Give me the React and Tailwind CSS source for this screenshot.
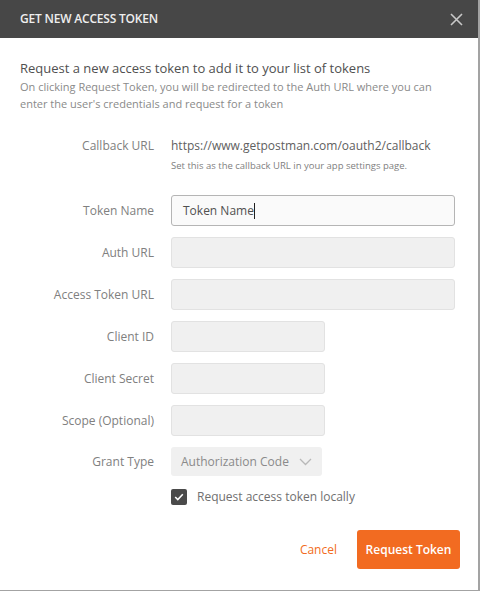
import React from 'react';

const font = { fontFamily: '"Open Sans", "Noto Sans", Arial, sans-serif' };

function Row({ label, width = 'w-[284px]', children }) {
    return (
        <div className="flex items-center">
            <div className="w-[154px] text-right text-[12px] text-[#808080]">{label}</div>
            <div className="ml-[17px]">
                {children || (
                    <div className={`${width} h-[31px] rounded-[3px] border border-[#e2e2e2] bg-[#f0f0f0]`} />
                )}
            </div>
        </div>
    );
}

export default function App() {
    return (
        <div className="w-[483px] h-[592px] bg-white overflow-hidden" style={font}>
            <div className="w-[480px] h-[591px] border-r-2 border-b border-[#a3a3a3] bg-white flex flex-col">

                {/* Header */}
                <div className="h-[38px] bg-[#474747] flex items-center justify-between pl-5 pr-[15px] shrink-0">
                    <span className="text-[12px] font-semibold text-[#eeeeee] tracking-[-0.2px]">GET NEW ACCESS TOKEN</span>
                    <svg width="13" height="13" viewBox="0 0 13 13" className="text-[#c8c8c8]">
                        <path d="M1 1 L12 12 M12 1 L1 12" stroke="currentColor" strokeWidth="1.6" />
                    </svg>
                </div>

                {/* Intro */}
                <div className="px-5 pt-[21px]">
                    <div className="text-[13px] text-[#505050] leading-[18px]">Request a new access token to add it to your list of tokens</div>
                    <div className="text-[11px] text-[#8a8a8a] leading-[17px] mt-[1px]">
                        On clicking Request Token, you will be redirected to the Auth URL where you can enter the user's credentials and request for a token
                    </div>
                </div>

                {/* Callback */}
                <div className="flex mt-[25px]">
                    <div className="w-[154px] text-right text-[12px] text-[#808080] leading-[18px]">Callback URL</div>
                    <div className="ml-[17px]">
                        <div className="text-[12px] text-[#606060] leading-[18px]">https://www.getpostman.com/oauth2/callback</div>
                        <div className="text-[9.5px] text-[#808080] mt-[4px] leading-[14px]">Set this as the callback URL in your app settings page.</div>
                    </div>
                </div>

                {/* Fields */}
                <div className="flex flex-col gap-[11px] mt-[22px]">
                    <Row label="Token Name">
                        <div className="w-[284px] h-[31px] rounded-[3px] border border-[#b5b5b5] bg-[#fafafa] flex items-center pl-[11px] text-[12px] text-[#505050]">
                            Token Name<span className="w-px h-[16px] bg-[#202020]" />
                        </div>
                    </Row>
                    <Row label="Auth URL" />
                    <Row label="Access Token URL" />
                    <Row label="Client ID" width="w-[154px]" />
                    <Row label="Client Secret" width="w-[154px]" />
                    <Row label="Scope (Optional)" width="w-[154px]" />
                    <Row label="Grant Type">
                        <div className="w-[151px] h-[29px] rounded-[3px] bg-[#f0f0f0] flex items-center justify-between pl-[10px] pr-[10px] text-[12px] text-[#8a8a8a]">
                            <span>Authorization Code</span>
                            <svg width="13" height="8" viewBox="0 0 13 8">
                                <path d="M1 1 L6.5 6.5 L12 1" fill="none" stroke="#b8b8b8" strokeWidth="1.3" />
                            </svg>
                        </div>
                    </Row>
                </div>

                {/* Checkbox */}
                <div className="flex items-center ml-[171px] mt-[12px]">
                    <div className="w-[16px] h-[16px] rounded-[2px] bg-[#4a4a4a] flex items-center justify-center">
                        <svg width="10" height="8" viewBox="0 0 10 8">
                            <path d="M1.2 4 L3.8 6.5 L8.8 1.3" fill="none" stroke="white" strokeWidth="1.6" />
                        </svg>
                    </div>
                    <span className="ml-[10px] text-[12px] text-[#707070]">Request access token locally</span>
                </div>

                {/* Actions */}
                <div className="flex items-center justify-end pr-[18px] mt-[24px]">
                    <button className="text-[12px] text-[#f26b21] mr-[20px]">Cancel</button>
                    <button className="h-[39px] w-[103px] whitespace-nowrap rounded-[3px] bg-[#f26b21] text-white text-[12px] font-semibold">Request Token</button>
                </div>
            </div>
        </div>
    );
}
